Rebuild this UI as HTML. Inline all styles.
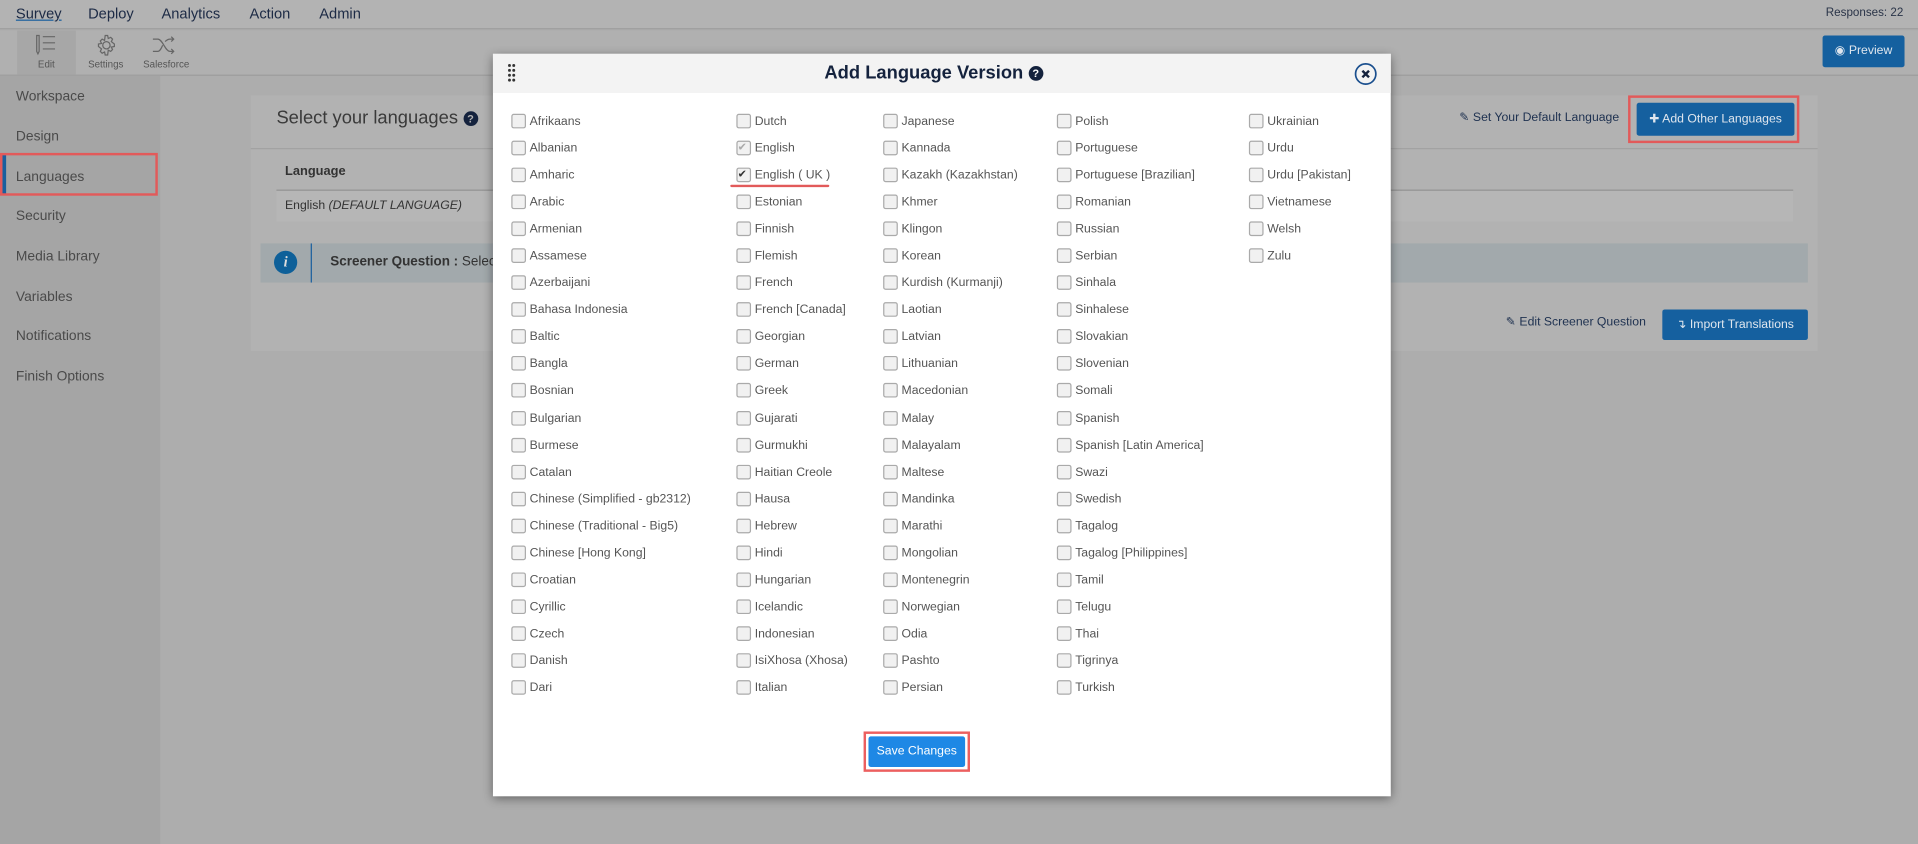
<!DOCTYPE html>
<html><head><meta charset="utf-8">
<style>
*{margin:0;padding:0;box-sizing:border-box}
html,body{width:1918px;height:844px;overflow:hidden;background:#adadad}
body{font-family:"Liberation Sans",sans-serif}
#w{position:absolute;left:0;top:0;width:1568px;height:690px;transform:scale(1.2232);transform-origin:0 0;background:#adadad}
.a{position:absolute;white-space:nowrap}
.nav{font-size:12px;color:#1c2a45;top:4px}
.side{font-size:11.3px;color:#4a4a4a;left:13px}
.col{position:absolute;top:89px;font-size:10px;color:#555;line-height:22.05px}
.col div{position:relative;padding-left:15px;height:22.05px;white-space:nowrap}
.col div:before{content:"";position:absolute;left:0;top:4px;width:10px;height:10px;border:1px solid #aaa;border-radius:2px;background:#f1f1f1}
.btn{background:#15609f;color:#dfe6ee;font-size:10px;border-radius:2px;text-align:center}
</style></head><body>
<div id="w">
<div class="a" style="left:0;top:0;width:1568px;height:24px;background:#b3b3b3;border-bottom:1px solid #9e9e9e"></div>
<div class="a nav" style="left:13px;text-decoration:underline;text-decoration-color:#1a5f9e">Survey</div>
<div class="a nav" style="left:72px">Deploy</div>
<div class="a nav" style="left:132px">Analytics</div>
<div class="a nav" style="left:204px">Action</div>
<div class="a nav" style="left:261px">Admin</div>
<div class="a" style="right:12px;top:5px;font-size:9.5px;color:#2a3448">Responses: 22</div>
<div class="a" style="left:0;top:25px;width:1568px;height:37px;background:#b0b0b0;border-bottom:1px solid #9c9c9c"></div>
<div class="a" style="left:14px;top:25px;width:48px;height:36px;background:#a7a7a7"></div>
<svg class="a" style="left:28px;top:28px" width="20" height="18" viewBox="0 0 20 18" fill="none" stroke="#666" stroke-width="1"><path d="M2 1v13l1 2 1-2V1z M7 2h10M7 7h10M7 12h10"/></svg>
<div class="a" style="left:31px;top:48px;font-size:8px;color:#555">Edit</div>
<svg class="a" style="left:78px;top:28px" width="18" height="18" viewBox="0 0 18 18" fill="none" stroke="#666" stroke-width="1"><circle cx="9" cy="9" r="3"/><path d="M8 1h2l.5 2.5 2-1 1.5 1.5-1 2L15.5 8v2L13 10.5l1 2-1.5 1.5-2-1L10 17H8l-.5-2.5-2 1L4 14l1-2L2.5 10V8L5 7.5 4 5.5 5.5 4l2 1z"/></svg>
<div class="a" style="left:72px;top:48px;font-size:8px;color:#555">Settings</div>
<svg class="a" style="left:124px;top:28px" width="20" height="18" viewBox="0 0 20 18" fill="none" stroke="#666" stroke-width="1"><path d="M1 4h4c4 0 6 10 10 10h3M16 12l2 2-2 2M1 14h4c2 0 3-3 4-5M11 6c1-1 2-2 4-2h3M16 2l2 2-2 2"/></svg>
<div class="a" style="left:117px;top:48px;font-size:8px;color:#555">Salesforce</div>
<div class="a btn" style="left:1490px;top:29px;width:67px;height:26px;line-height:26px">&#9673; Preview</div>
<div class="a" style="left:0;top:62px;width:131px;height:628px;background:#a5a5a5"></div>
<div class="a side" style="top:73px">Workspace</div>
<div class="a side" style="top:106px">Design</div>
<div class="a" style="left:2px;top:126px;width:3px;height:33px;background:#1a5f9e"></div>
<div class="a side" style="top:139px">Languages</div>
<div class="a" style="left:0;top:125px;width:129px;height:35px;border:2px solid #e25a5a"></div>
<div class="a side" style="top:171px">Security</div>
<div class="a side" style="top:204px">Media Library</div>
<div class="a side" style="top:237px">Variables</div>
<div class="a side" style="top:269px">Notifications</div>
<div class="a side" style="top:302px">Finish Options</div>
<div class="a" style="left:205px;top:78px;width:1281px;height:209px;background:#b2b2b2"></div>
<div class="a" style="left:205px;top:121px;width:1281px;height:1px;background:#a2a2a2"></div>
<div class="a" style="left:226px;top:88px;font-size:15px;color:#3a3a3a">Select your languages <span style="display:inline-block;width:12px;height:12px;border-radius:50%;background:#14223d;color:#b2b2b2;font-size:9px;font-weight:bold;text-align:center;line-height:12px;vertical-align:1px">?</span></div>
<div class="a" style="left:233px;top:134px;font-size:10.5px;font-weight:bold;color:#333">Language</div>
<div class="a" style="left:226px;top:155px;width:1240px;height:1px;background:#8f8f8f"></div>
<div class="a" style="left:226px;top:156px;width:1240px;height:25px;background:#b6b6b6"></div>
<div class="a" style="left:233px;top:163px;font-size:10px;color:#333">English <i>(DEFAULT LANGUAGE)</i></div>
<div class="a" style="left:213px;top:199px;width:1265px;height:32px;background:#a2a9ac"></div>
<div class="a" style="left:224px;top:205px;width:19px;height:19px;border-radius:50%;background:#0e6099;color:#ddd;font:italic bold 12px 'Liberation Serif',serif;text-align:center;line-height:19px">i</div>
<div class="a" style="left:254px;top:199px;width:1px;height:32px;background:#1a5f9e"></div>
<div class="a" style="left:270px;top:208px;font-size:11px;color:#333"><b>Screener Question :</b> Selec</div>
<div class="a" style="left:1193px;top:91px;font-size:10px;color:#1e3150">&#9998; Set Your Default Language</div>
<div class="a btn" style="left:1338px;top:84px;width:129px;height:27px;line-height:27px">&#10010; Add Other Languages</div>
<div class="a" style="left:1331px;top:78px;width:140px;height:39px;border:2px solid #e25a5a"></div>
<div class="a" style="left:1231px;top:258px;font-size:10px;color:#1e3150">&#9998; Edit Screener Question</div>
<div class="a btn" style="left:1359px;top:253px;width:119px;height:25px;line-height:25px">&#8628; Import Translations</div>
<div class="a" style="left:403px;top:44px;width:734px;height:607px;background:#fff;box-shadow:0 2px 8px rgba(0,0,0,.45)"></div>
<div class="a" style="left:403px;top:44px;width:734px;height:32px;background:#f3f3f3"></div>
<svg class="a" style="left:415px;top:52px" width="7" height="15" viewBox="0 0 7 15" fill="#333"><circle cx="1.5" cy="1.5" r="1.2"/><circle cx="5" cy="1.5" r="1.2"/><circle cx="1.5" cy="5.5" r="1.2"/><circle cx="5" cy="5.5" r="1.2"/><circle cx="1.5" cy="9.5" r="1.2"/><circle cx="5" cy="9.5" r="1.2"/><circle cx="1.5" cy="13.5" r="1.2"/><circle cx="5" cy="13.5" r="1.2"/></svg>
<div class="a" style="left:674px;top:51px;font-size:15px;font-weight:bold;color:#14223d">Add Language Version <span style="display:inline-block;width:12px;height:12px;border-radius:50%;background:#14223d;color:#fff;font-size:9px;text-align:center;line-height:12px;vertical-align:1px">?</span></div>
<svg class="a" style="left:1107px;top:51px" width="19" height="19" viewBox="0 0 19 19"><circle cx="9.5" cy="9.5" r="8.3" fill="none" stroke="#1a4f8e" stroke-width="1.4"/><path d="M6.8 6.8l5.4 5.4M12.2 6.8l-5.4 5.4" stroke="#14223d" stroke-width="2"/></svg>
<div class="col" style="left:418px"><div>Afrikaans</div><div>Albanian</div><div>Amharic</div><div>Arabic</div><div>Armenian</div><div>Assamese</div><div>Azerbaijani</div><div>Bahasa Indonesia</div><div>Baltic</div><div>Bangla</div><div>Bosnian</div><div>Bulgarian</div><div>Burmese</div><div>Catalan</div><div>Chinese (Simplified - gb2312)</div><div>Chinese (Traditional - Big5)</div><div>Chinese [Hong Kong]</div><div>Croatian</div><div>Cyrillic</div><div>Czech</div><div>Danish</div><div>Dari</div></div>
<div class="col" style="left:602px"><div>Dutch</div><div>English<span class="a" style="left:1px;top:-2px;font-size:9px;color:#aaa">✔</span></div><div>English ( UK )<span class="a" style="left:1px;top:-2px;font-size:9px;color:#333">✔</span></div><div>Estonian</div><div>Finnish</div><div>Flemish</div><div>French</div><div>French [Canada]</div><div>Georgian</div><div>German</div><div>Greek</div><div>Gujarati</div><div>Gurmukhi</div><div>Haitian Creole</div><div>Hausa</div><div>Hebrew</div><div>Hindi</div><div>Hungarian</div><div>Icelandic</div><div>Indonesian</div><div>IsiXhosa (Xhosa)</div><div>Italian</div></div>
<div class="a" style="left:597px;top:151px;width:81px;height:2px;background:#e25a5a;border-radius:1px"></div>
<div class="col" style="left:722px"><div>Japanese</div><div>Kannada</div><div>Kazakh (Kazakhstan)</div><div>Khmer</div><div>Klingon</div><div>Korean</div><div>Kurdish (Kurmanji)</div><div>Laotian</div><div>Latvian</div><div>Lithuanian</div><div>Macedonian</div><div>Malay</div><div>Malayalam</div><div>Maltese</div><div>Mandinka</div><div>Marathi</div><div>Mongolian</div><div>Montenegrin</div><div>Norwegian</div><div>Odia</div><div>Pashto</div><div>Persian</div></div>
<div class="col" style="left:864px"><div>Polish</div><div>Portuguese</div><div>Portuguese [Brazilian]</div><div>Romanian</div><div>Russian</div><div>Serbian</div><div>Sinhala</div><div>Sinhalese</div><div>Slovakian</div><div>Slovenian</div><div>Somali</div><div>Spanish</div><div>Spanish [Latin America]</div><div>Swazi</div><div>Swedish</div><div>Tagalog</div><div>Tagalog [Philippines]</div><div>Tamil</div><div>Telugu</div><div>Thai</div><div>Tigrinya</div><div>Turkish</div></div>
<div class="col" style="left:1021px"><div>Ukrainian</div><div>Urdu</div><div>Urdu [Pakistan]</div><div>Vietnamese</div><div>Welsh</div><div>Zulu</div></div>
<div class="a" style="left:710px;top:602px;width:79px;height:25px;background:#1e88e5;color:#fff;font-size:10px;text-align:center;line-height:25px;border-radius:2px">Save Changes</div>
<div class="a" style="left:706px;top:598px;width:87px;height:33px;border:2px solid #ec5f5f"></div>
</div>
</body></html>
